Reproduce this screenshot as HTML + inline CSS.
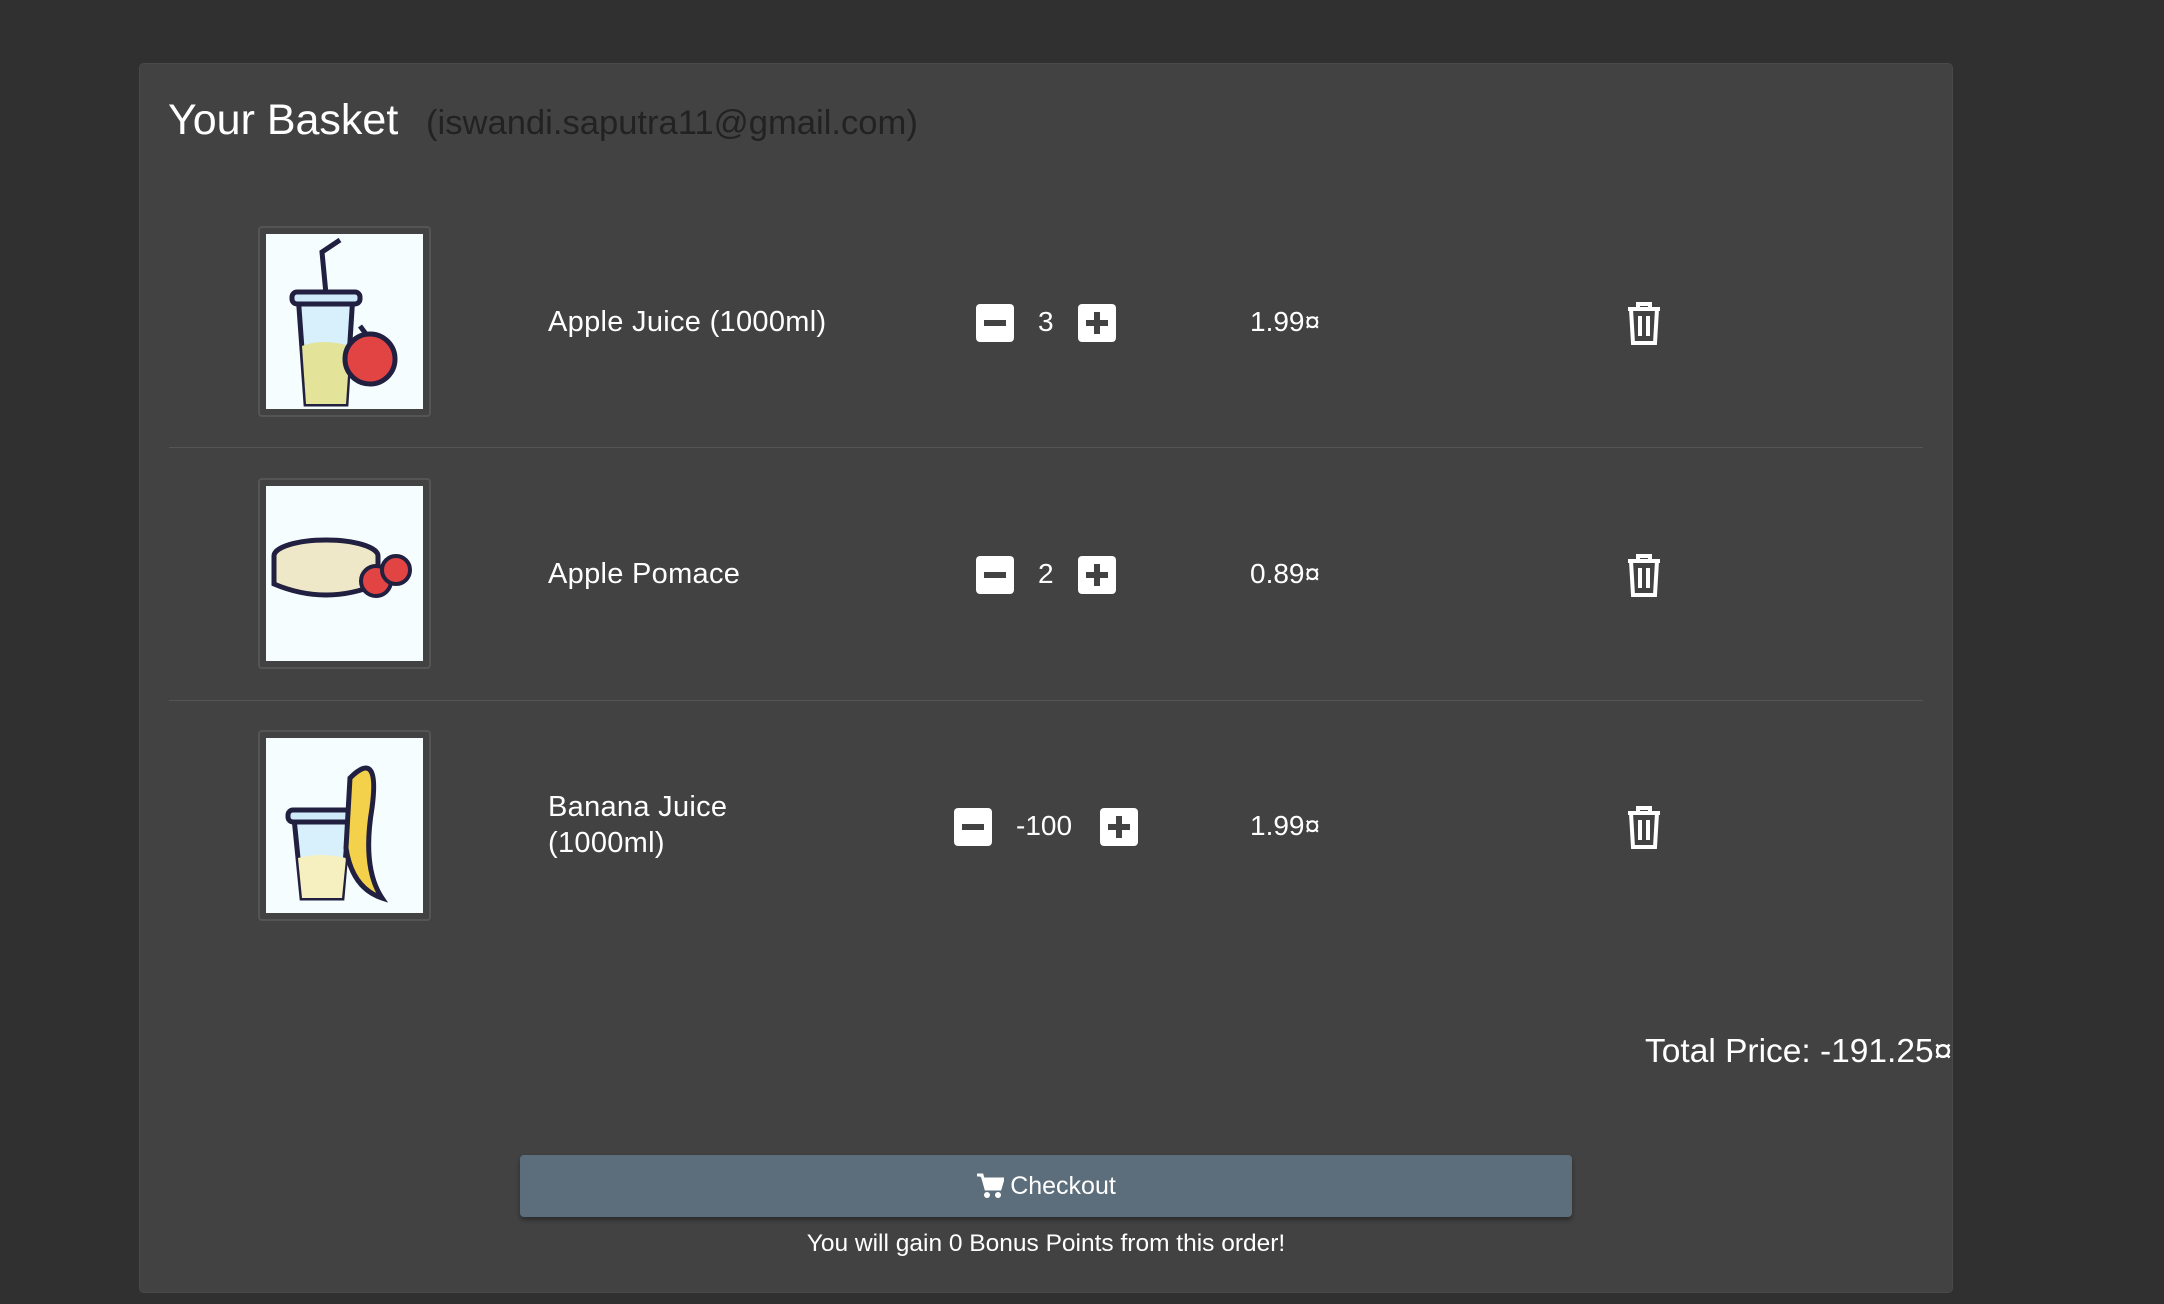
<!DOCTYPE html>
<html><head><style>
*{margin:0;padding:0;box-sizing:border-box}
body{width:2164px;height:1304px;background:#303030;font-family:"Liberation Sans",Arial,sans-serif;color:#fff;position:relative;overflow:hidden}
.card{position:absolute;left:139px;top:63px;width:1814px;height:1230px;background:#424242;border-radius:5px;border:1px solid #4a4a4a}
.a{position:absolute}
.title{left:168px;top:96px;font-size:43px}
.email{left:426px;top:104px;font-size:34.6px;color:#222}
.img{width:173px;height:191px;border:2px solid #555;border-radius:4px;background:#424242;padding:6px}
.img div{width:100%;height:100%;background:#f6fdff}
.name{font-size:29px;line-height:36px;letter-spacing:.3px}
.btn{width:38px;height:38px;background:#fff;border-radius:4px}
.btn svg{display:block}
.num{font-size:28px}
.hr{left:169px;width:1754px;height:1px;background:#555}
.co{left:520px;top:1155px;width:1052px;height:62px;background:#5c6e7b;border-radius:4px;box-shadow:0 3px 4px rgba(0,0,0,.35);font-size:25px;display:flex;align-items:center;justify-content:center;gap:6px}
</style></head><body>
<div class="card"></div>
<div class="a title">Your Basket</div>
<div class="a email">(iswandi.saputra11@gmail.com)</div>

<div class="a img" style="left:258px;top:226px"><div>
<svg width="157" height="175" viewBox="0 0 157 175"><path d="M32 60h55l-7 110H40z" fill="#d8f0fb" stroke="#222040" stroke-width="5"/><path d="M36 112q20-8 48 0l-4 58H40z" fill="#e3e39a"/><rect x="26" y="58" width="68" height="12" rx="5" fill="#cfeaf8" stroke="#222040" stroke-width="5"/><path d="M60 60L56 18l18-12" fill="none" stroke="#222040" stroke-width="5"/><circle cx="104" cy="125" r="25" fill="#e24444" stroke="#222040" stroke-width="5"/><path d="M100 100l-6-8" stroke="#222040" stroke-width="5"/></svg></div></div>
<div class="a name" style="left:548px;top:304px">Apple Juice (1000ml)</div>
<div class="a btn" style="left:976px;top:304px"><svg width="38" height="38"><rect x="8" y="16" width="22" height="6" fill="#424242"/></svg></div>
<div class="a num" style="left:1038px;top:306px">3</div>
<div class="a btn" style="left:1078px;top:304px"><svg width="38" height="38"><rect x="8" y="16" width="22" height="6" fill="#424242"/><rect x="16" y="8" width="6" height="22" fill="#424242"/></svg></div>
<div class="a num" style="left:1250px;top:306px">1.99¤</div>
<svg class="a" style="left:1624px;top:300px" width="40" height="46" viewBox="0 0 40 46"><path d="M4 9h32M14 9V4h12v5M7 9l2 34h22l2-34M16 16v20M24 16v20" fill="none" stroke="#fff" stroke-width="4"/></svg>
<div class="a hr" style="top:447px"></div>

<div class="a img" style="left:258px;top:478px"><div>
<svg width="157" height="175" viewBox="0 0 157 175"><ellipse cx="60" cy="70" rx="52" ry="16" fill="#efe8c8" stroke="#222040" stroke-width="5"/><path d="M8 70v28q52 22 104 0V70" fill="#efe8c8" stroke="#222040" stroke-width="5"/><circle cx="110" cy="95" r="15" fill="#e24444" stroke="#222040" stroke-width="4"/><circle cx="130" cy="84" r="14" fill="#e24444" stroke="#222040" stroke-width="4"/></svg></div></div>
<div class="a name" style="left:548px;top:556px">Apple Pomace</div>
<div class="a btn" style="left:976px;top:556px"><svg width="38" height="38"><rect x="8" y="16" width="22" height="6" fill="#424242"/></svg></div>
<div class="a num" style="left:1038px;top:558px">2</div>
<div class="a btn" style="left:1078px;top:556px"><svg width="38" height="38"><rect x="8" y="16" width="22" height="6" fill="#424242"/><rect x="16" y="8" width="6" height="22" fill="#424242"/></svg></div>
<div class="a num" style="left:1250px;top:558px">0.89¤</div>
<svg class="a" style="left:1624px;top:552px" width="40" height="46" viewBox="0 0 40 46"><path d="M4 9h32M14 9V4h12v5M7 9l2 34h22l2-34M16 16v20M24 16v20" fill="none" stroke="#fff" stroke-width="4"/></svg>
<div class="a hr" style="top:700px"></div>

<div class="a img" style="left:258px;top:730px"><div>
<svg width="157" height="175" viewBox="0 0 157 175"><path d="M28 80h55l-7 80H36z" fill="#d8f0fb" stroke="#222040" stroke-width="5"/><path d="M32 120q22-6 48 0l-4 40H36z" fill="#f6f0c0"/><rect x="22" y="72" width="66" height="12" rx="5" fill="#cfeaf8" stroke="#222040" stroke-width="5"/><path d="M84 40q30-30 22 30q-10 60 10 90q-30-10-36-50z" fill="#f3d14a" stroke="#222040" stroke-width="5"/></svg></div></div>
<div class="a name" style="left:548px;top:789px">Banana Juice<br>(1000ml)</div>
<div class="a btn" style="left:954px;top:808px"><svg width="38" height="38"><rect x="8" y="16" width="22" height="6" fill="#424242"/></svg></div>
<div class="a num" style="left:1016px;top:810px">-100</div>
<div class="a btn" style="left:1100px;top:808px"><svg width="38" height="38"><rect x="8" y="16" width="22" height="6" fill="#424242"/><rect x="16" y="8" width="6" height="22" fill="#424242"/></svg></div>
<div class="a num" style="left:1250px;top:810px">1.99¤</div>
<svg class="a" style="left:1624px;top:804px" width="40" height="46" viewBox="0 0 40 46"><path d="M4 9h32M14 9V4h12v5M7 9l2 34h22l2-34M16 16v20M24 16v20" fill="none" stroke="#fff" stroke-width="4"/></svg>

<div class="a" style="left:1645px;top:1033px;font-size:33.5px">Total Price: -191.25¤</div>
<div class="a co"><svg width="28" height="26" viewBox="0 0 28 26"><path d="M1 2h5l4 14h14l3-10H8" fill="#fff" stroke="#fff" stroke-width="3"/><circle cx="11" cy="22" r="3" fill="#fff"/><circle cx="22" cy="22" r="3" fill="#fff"/></svg>Checkout</div>
<div class="a" style="left:520px;width:1052px;top:1230px;text-align:center;font-size:24.5px">You will gain 0 Bonus Points from this order!</div>
</body></html>
